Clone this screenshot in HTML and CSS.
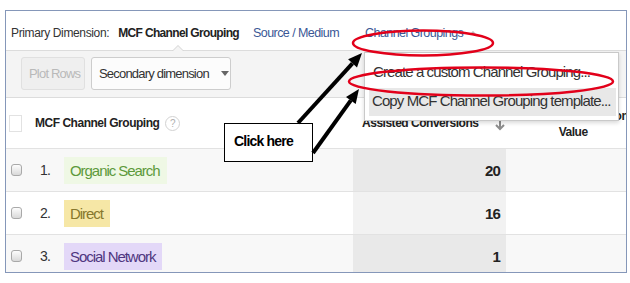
FILE: index.html
```html
<!DOCTYPE html>
<html lang="en">
<head>
    <meta charset="UTF-8">
    <title>MCF Channel Grouping</title>
    <link rel="stylesheet" href="styles.css">
</head>
<body>
<div class="stage">
    <div class="panel">
        <div class="dim-bar">
            <span class="dim-label">Primary Dimension:</span>
            <span class="dim-current">MCF Channel Grouping</span>
            <a class="dim-link">Source / Medium</a>
            <a class="dim-link dim-open">Channel Groupings <span class="caret-up"></span></a>
        </div>

        <div class="toolbar">
            <span class="btn btn-disabled">Plot Rows</span>
            <span class="btn btn-select">Secondary dimension <span class="caret-down"></span></span>
        </div>

        <div class="row head">
            <div class="cell first">
                <span class="check-all"></span>
                <span class="col-title">MCF Channel Grouping</span>
                <span class="help">?</span>
            </div>
            <div class="cell metric-head">
                <span class="col-title">Assisted Conversions</span>
                <svg class="sort" width="10" height="11" viewBox="0 0 10 11">
                    <path d="M5 0v9M1 5l4 4 4-4" fill="none" stroke="#8c8c8c" stroke-width="2"/>
                </svg>
            </div>
            <div class="cell value-head">
                <span class="col-title">Assisted Conversion</span>
                <span class="col-title">Value</span>
            </div>
        </div>

        <div class="row odd">
            <div class="cell first">
                <span class="check"></span>
                <span class="num">1.</span>
                <span class="tag tag-green">Organic Search</span>
            </div>
            <div class="cell metric">20</div>
            <div class="cell"></div>
        </div>
        <div class="row">
            <div class="cell first">
                <span class="check"></span>
                <span class="num">2.</span>
                <span class="tag tag-yellow">Direct</span>
            </div>
            <div class="cell metric">16</div>
            <div class="cell"></div>
        </div>
        <div class="row odd">
            <div class="cell first">
                <span class="check"></span>
                <span class="num">3.</span>
                <span class="tag tag-purple">Social Network</span>
            </div>
            <div class="cell metric">1</div>
            <div class="cell"></div>
        </div>

        <div class="menu">
            <div class="menu-item">Create a custom Channel Grouping...</div>
            <div class="menu-item active">Copy MCF Channel Grouping template...</div>
        </div>
    </div>

    <div class="callout">Click here</div>

    <svg class="marks" width="630" height="283" viewBox="0 0 630 283">
        <ellipse cx="423" cy="33" rx="70" ry="12.5" fill="none" stroke="#e2001a" stroke-width="2.5"/>
        <ellipse cx="481" cy="71.5" rx="132" ry="14" fill="none" stroke="#e2001a" stroke-width="2.5"/>
        <line x1="298" y1="113" x2="352.5" y2="53.3" stroke="#000" stroke-width="4"/>
        <polygon points="362,43 357,57.4 348.1,49.3" fill="#000"/>
        <line x1="313" y1="143" x2="350.8" y2="90.4" stroke="#000" stroke-width="4"/>
        <polygon points="359,79 355.7,93.9 346,86.9" fill="#000"/>
    </svg>
</div>
</body>
</html>
```

FILE: styles.css
```css
body {
    margin: 0;
    background-color: white;
    font-family: "Liberation Sans", Arial, sans-serif;
    color: #333;
    letter-spacing: -0.05em;
}
.stage {
    position: relative;
    width: 630px;
    height: 283px;
}
.panel {
    position: relative;
    margin: 10px 0 0 5px;
    width: 620px;
    height: 261px;
    border: 1px solid #8597b9;
    overflow: hidden;
}

/* primary dimension line */
.dim-bar {
    position: relative;
    display: flex;
    align-items: center;
    height: 35px;
    padding: 4px 0 0 5px;
    font-size: 12px;
    letter-spacing: -0.03em;
    white-space: nowrap;
    border-bottom: 1px solid #dcdcdc;
}
.dim-bar::before, .dim-bar::after {
    content: "";
    position: absolute;
    left: 166px;
    border: 6px solid transparent;
    border-top: 0;
}
.dim-bar::before {
    bottom: -1px;
    border-bottom-color: #d4d4d4;
}
.dim-bar::after {
    bottom: -1px;
    left: 167px;
    border-width: 0 5px 5px;
    border-bottom-color: #f4f4f4;
}
.dim-current {
    font-weight: bold;
    margin-left: 9px;
    letter-spacing: -0.055em;
    color: #222;
}
.dim-link {
    color: #3a5795;
    margin-left: 14px;
    font-size: 12.5px;
    letter-spacing: -0.045em;
}
.dim-open {
    margin-left: 26px;
}
.caret-up {
    display: inline-block;
    margin-left: 3px;
    vertical-align: 2px;
    border: 4px solid transparent;
    border-top: 0;
    border-bottom: 4px solid #b5b5b5;
}

/* toolbar */
.toolbar {
    display: flex;
    gap: 6px;
    height: 40px;
    padding: 6px 0 0 15px;
    background-color: #f4f4f4;
    border-bottom: 1px solid #dcdcdc;
}
.btn {
    display: flex;
    align-items: center;
    box-sizing: border-box;
    height: 33px;
    padding: 0 7px;
    font-size: 13px;
    white-space: nowrap;
    border: 1px solid #d6d6d6;
    border-radius: 3px;
}
.btn-disabled {
    width: 64px;
    color: #b9b9b9;
    background-color: #efefef;
    border-color: #e0e0e0;
}
.btn-select {
    width: 140px;
    background-color: #fcfcfc;
    border-color: #cdcdcd;
}
.caret-down {
    margin-left: 12px;
    border: 4px solid transparent;
    border-bottom: 0;
    border-top: 5px solid #666;
}

/* report table */
.row {
    display: grid;
    grid-template-columns: 347px 153px 1fr;
    height: 43px;
    box-sizing: border-box;
    border-bottom: 1px solid #e2e2e2;
}
.row.head {
    height: 51px;
    background-color: white;
}
.row.odd {
    background-color: #f8f8f8;
}
.cell {
    display: flex;
    align-items: center;
    white-space: nowrap;
}
.first {
    padding-left: 5px;
}
.col-title {
    font-size: 12px;
    font-weight: bold;
    letter-spacing: -0.04em;
    color: #222;
}
.check-all {
    width: 13px;
    height: 17px;
    margin: 0 13px 0 -2px;
    box-sizing: border-box;
    border: 1px solid #e2e2e2;
    background-color: white;
}
.help {
    width: 15px;
    height: 15px;
    margin-left: 6px;
    box-sizing: border-box;
    border: 1px solid #d2d2d2;
    border-radius: 50%;
    font-size: 10px;
    line-height: 13px;
    text-align: center;
    letter-spacing: 0;
    color: #b0b0b0;
}
.metric-head {
    padding-left: 9px;
    align-items: flex-start;
    padding-top: 18px;
    box-sizing: border-box;
}
.sort {
    margin: 4px 0 0 17px;
}
.value-head {
    flex-direction: column;
    align-items: center;
    justify-content: center;
    padding-left: 12px;
    padding-top: 2px;
    line-height: 16px;
}
.check {
    width: 11px;
    height: 12px;
    margin-right: 18px;
    box-sizing: border-box;
    border: 1px solid #a9a9a9;
    border-radius: 3px;
    background: linear-gradient(#fdfdfd, #d9d9d9);
}
.num {
    width: 24px;
    font-size: 14px;
}
.tag {
    height: 27px;
    line-height: 27px;
    padding: 0 7px 0 6px;
    font-size: 15px;
    letter-spacing: -0.07em;
}
.tag-green {
    background-color: #eff8e5;
    color: #5d9a3b;
}
.tag-yellow {
    background-color: #f6e7a6;
    color: #87782d;
}
.tag-purple {
    background-color: #e3d8f8;
    color: #4f3680;
}
.metric {
    justify-content: flex-end;
    padding-right: 6px;
    font-size: 15px;
    font-weight: bold;
    color: #222;
    background-color: #f2f2f2;
}
.odd .metric {
    background-color: #e9e9e9;
}

/* dropdown from "Channel Groupings" */
.menu {
    position: absolute;
    left: 358px;
    top: 41px;
    width: 247px;
    padding: 4px 2px 4px 4px;
    background-color: white;
    border: 1px solid #c9c9c9;
    box-shadow: 0 2px 4px rgba(0, 0, 0, 0.15);
    font-size: 15px;
    letter-spacing: -0.06em;
    color: #333;
}
.menu-item {
    height: 30px;
    line-height: 30px;
    padding-left: 4px;
    white-space: nowrap;
}
.menu-item.active {
    height: 28px;
    line-height: 26px;
    margin-top: 1px;
    padding-left: 3px;
    background-color: #e8e8e8;
}

/* annotations drawn on top of the screenshot */
.callout {
    position: absolute;
    left: 224px;
    top: 113px;
    width: 78px;
    height: 37px;
    padding-left: 9px;
    border: 1px solid #000;
    background-color: white;
    font-size: 14px;
    font-weight: bold;
    line-height: 35px;
    color: #000;
}
.marks {
    position: absolute;
    left: 0;
    top: 0;
}
```
